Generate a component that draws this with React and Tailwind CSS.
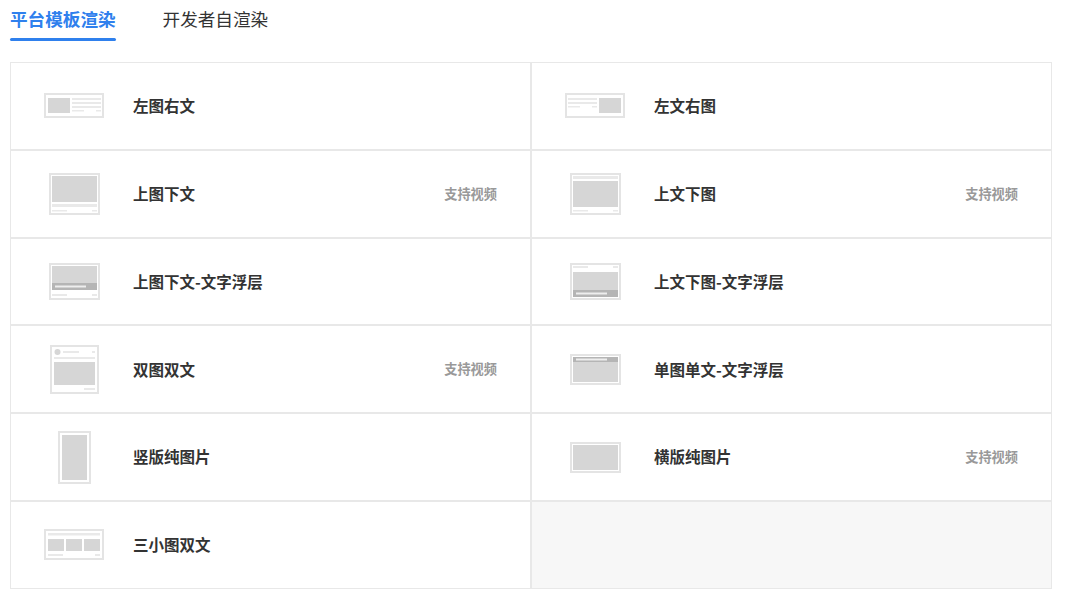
import React from "react";

const B = "#e4e4e4";
const L = "#e9e9e9";
const G = "#d6d6d6";
const D = "#b5b5b5";

function Frame({ w, h, children }) {
  return (
    <svg width={w} height={h} viewBox={`0 0 ${w} ${h}`}>
      <rect x="1" y="1" width={w - 2} height={h - 2} fill="#fff" stroke={B} strokeWidth="2" />
      {children}
    </svg>
  );
}

const icons = {
  lr: (
    <Frame w={60} h={25}>
      <rect x="4" y="5" width="22" height="15" fill={G} />
      <rect x="28" y="5" width="29" height="2" fill={L} />
      <rect x="28" y="9" width="29" height="2" fill={L} />
      <rect x="28" y="13" width="29" height="2" fill={L} />
      <rect x="28" y="17" width="12" height="1.5" fill={L} />
      <rect x="52" y="17" width="5" height="1.5" fill={L} />
    </Frame>
  ),
  rl: (
    <Frame w={60} h={25}>
      <rect x="34" y="5" width="22" height="15" fill={G} />
      <rect x="3" y="5" width="29" height="2" fill={L} />
      <rect x="3" y="9" width="29" height="2" fill={L} />
      <rect x="3" y="13" width="12" height="1.5" fill={L} />
      <rect x="27" y="13" width="5" height="1.5" fill={L} />
    </Frame>
  ),
  tb: (
    <Frame w={51} h={42}>
      <rect x="3" y="3" width="45" height="26" fill={G} />
      <rect x="3" y="31" width="45" height="3" fill={L} />
      <rect x="3" y="37" width="15" height="1.5" fill={L} />
      <rect x="43" y="37" width="5" height="1.5" fill={L} />
    </Frame>
  ),
  bt: (
    <Frame w={51} h={42}>
      <rect x="3" y="3" width="45" height="3" fill={L} />
      <rect x="3" y="8" width="45" height="26" fill={G} />
      <rect x="3" y="37" width="15" height="1.5" fill={L} />
      <rect x="43" y="37" width="5" height="1.5" fill={L} />
    </Frame>
  ),
  tbo: (
    <Frame w={51} h={37}>
      <rect x="3" y="3" width="45" height="24" fill={G} />
      <rect x="3" y="20" width="45" height="7" fill={D} />
      <rect x="6" y="22.5" width="31" height="2" fill="#eee" />
      <rect x="3" y="31" width="15" height="2" fill={L} />
      <rect x="43" y="31" width="5" height="2" fill={L} />
    </Frame>
  ),
  bto: (
    <Frame w={51} h={37}>
      <rect x="3" y="3" width="15" height="2" fill={L} />
      <rect x="43" y="3" width="5" height="2" fill={L} />
      <rect x="3" y="9" width="45" height="25" fill={G} />
      <rect x="3" y="27" width="45" height="7" fill={D} />
      <rect x="6" y="29.5" width="31" height="2" fill="#eee" />
    </Frame>
  ),
  dd: (
    <Frame w={49} h={49}>
      <circle cx="7.5" cy="7" r="3" fill={G} />
      <rect x="13" y="6" width="16" height="2" fill={L} />
      <rect x="42" y="6" width="3" height="2" fill={L} />
      <rect x="4" y="12" width="41" height="2" fill={L} />
      <rect x="4" y="17" width="41" height="23" fill={G} />
      <rect x="34" y="43" width="11" height="2" fill={L} />
    </Frame>
  ),
  so: (
    <Frame w={51} h={31}>
      <rect x="3" y="3" width="45" height="25" fill={G} />
      <rect x="3" y="3" width="45" height="5" fill={D} />
      <rect x="6" y="4.5" width="31" height="2" fill="#eee" />
    </Frame>
  ),
  vp: (
    <Frame w={33} h={53}>
      <rect x="4" y="4" width="25" height="45" fill={G} />
    </Frame>
  ),
  hp: (
    <Frame w={51} h={31}>
      <rect x="3" y="3" width="45" height="25" fill={G} />
    </Frame>
  ),
  three: (
    <Frame w={60} h={31}>
      <rect x="4" y="4" width="52" height="2.5" fill={L} />
      <rect x="4" y="10" width="16" height="12" fill={G} />
      <rect x="22" y="10" width="16" height="12" fill={G} />
      <rect x="40" y="10" width="16" height="12" fill={G} />
      <rect x="4" y="25" width="15" height="2" fill={L} />
      <rect x="51" y="25" width="5" height="2" fill={L} />
    </Frame>
  ),
};

const items = [
  { icon: "lr", label: "左图右文" },
  { icon: "rl", label: "左文右图" },
  { icon: "tb", label: "上图下文", video: true },
  { icon: "bt", label: "上文下图", video: true },
  { icon: "tbo", label: "上图下文-文字浮层" },
  { icon: "bto", label: "上文下图-文字浮层" },
  { icon: "dd", label: "双图双文", video: true },
  { icon: "so", label: "单图单文-文字浮层" },
  { icon: "vp", label: "竖版纯图片" },
  { icon: "hp", label: "横版纯图片", video: true },
  { icon: "three", label: "三小图双文" },
];

export default function App() {
  return (
    <div
      className="w-[1080px] h-[608px] bg-white overflow-hidden"
      style={{ fontFamily: '"Noto Sans CJK SC", "Noto Sans", sans-serif' }}
    >
      <div className="flex pl-[10px] gap-[47px] h-[62px]">
        <div className="flex flex-col">
          <div className="h-[38px] flex items-center text-[17.6px] font-bold text-[#2f80ed] leading-none">
            平台模板渲染
          </div>
          <div className="h-[3px] bg-[#2f80ed] rounded-sm" />
        </div>
        <div className="h-[38px] flex items-center text-[17.6px] text-[#333] leading-none">
          开发者自渲染
        </div>
      </div>
      <div className="ml-[10px] w-[1042px] grid grid-cols-2 gap-[2px] p-px bg-[#e8e8e8]">
        {items.map((it) => (
          <div key={it.label} className="h-[85.8px] bg-white flex items-center pl-[13px] pr-[33px]">
            <div className="w-[100px] flex justify-center items-center">{icons[it.icon]}</div>
            <div className="ml-[9px] flex-1 text-[15.5px] font-bold text-[#333]">{it.label}</div>
            {it.video && <div className="text-[13.2px] font-bold text-[#999]">支持视频</div>}
          </div>
        ))}
        <div className="h-[85.8px] bg-[#f7f7f7]" />
      </div>
    </div>
  );
}
